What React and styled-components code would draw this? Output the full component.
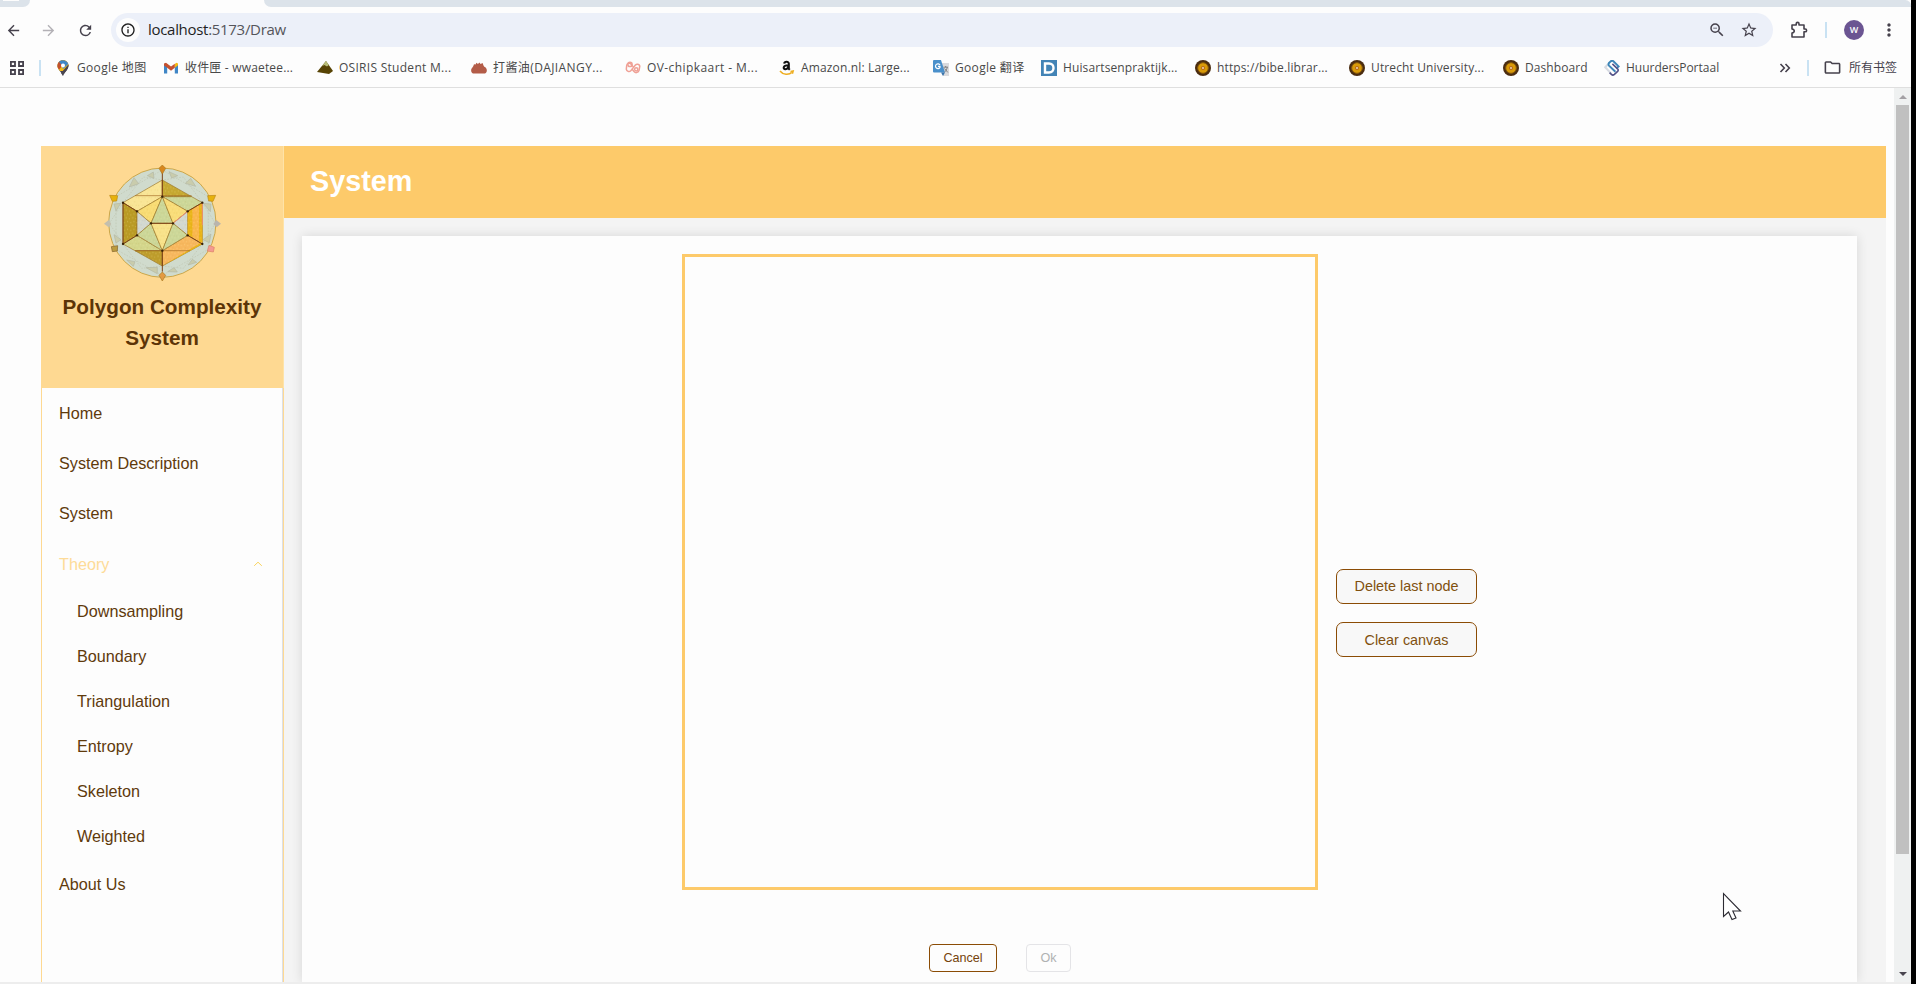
import React from "react";
import styled, { createGlobalStyle } from "styled-components";
import { MdArrowBack, MdArrowForward, MdRefresh, MdOutlineInfo, MdStarBorder, MdMoreVert, MdOutlineFolder, MdZoomOut } from "react-icons/md";

const GlobalStyle = createGlobalStyle`
  * { box-sizing: border-box; }
  body { margin: 0; background: #000; overflow: hidden; }
`;

const ui = `"Open Sans", "Noto Sans CJK SC", sans-serif`;

const Window = styled.div`
  width: 1911px;
  height: 984px;
  display: flex;
  flex-direction: column;
  background: #fdfdfd;
  font-family: "Liberation Sans", Arial, sans-serif;
  position: relative;
`;

const TabStrip = styled.div`
  height: 7px;
  flex: none;
  display: flex;
  background: #fdfdfd;
`;
const TabPiece = styled.div`
  height: 7px;
  width: ${(p) => p.$width};
  margin-left: ${(p) => p.$gap || 0}px;
  padding-left: 3px;
  background: #dce3ea;
  border-radius: ${(p) => p.$radius};
`;
const TabStub = styled.div`
  width: 16px;
  height: 1px;
  background: #fdfdfd;
`;

const Toolbar = styled.div`
  height: 46px;
  flex: none;
  display: flex;
  align-items: center;
  color: #45414c;
`;
const ToolIcon = styled.span`
  display: flex;
  width: ${(p) => p.$width || 18}px;
  margin-left: ${(p) => p.$left || 0}px;
  color: ${(p) => p.$color || "#45414c"};
  svg { display: block; flex: none; }
`;
const AddressBar = styled.div`
  width: 1662px;
  height: 34px;
  margin-left: 17px;
  padding-left: 5px;
  border-radius: 17px;
  background: #ecf0f9;
  display: flex;
  align-items: center;
`;
const SiteInfo = styled.span`
  width: 24px;
  height: 24px;
  border-radius: 50%;
  background: #fdfdfd;
  color: #1f1f1f;
  display: flex;
  align-items: center;
  justify-content: center;
`;
const Url = styled.span`
  margin-left: 8px;
  padding-bottom: 2px;
  flex: 1;
  font: 15px/20px ${ui};
  letter-spacing: -0.3px;
  color: #55555b;
  b { font-weight: 400; color: #1f1f1f; }
`;
const Rule = styled.span`
  width: 2px;
  height: 16px;
  background: #c9e2f3;
  margin-left: ${(p) => p.$left}px;
`;
const Avatar = styled.span`
  width: 20px;
  height: 20px;
  margin-left: 17px;
  border-radius: 50%;
  background: #6b5592;
  color: #fff;
  font: 600 9px/20px ${ui};
  text-align: center;
`;

const BookmarkBar = styled.div`
  height: 35px;
  flex: none;
  padding-bottom: 5px;
  border-bottom: 1px solid #dfdfdf;
  display: flex;
  align-items: center;
  font: 12px/18px ${ui};
  color: #494949;
  white-space: nowrap;
`;
const Bookmark = styled.span`
  width: ${(p) => p.$width}px;
  display: flex;
  gap: 6px;
  align-items: center;
  letter-spacing: ${(p) => p.$track || 0}px;
  svg { flex: none; display: block; }
`;

const Viewport = styled.div`
  flex: 1;
  min-height: 0;
  display: flex;
  border-bottom: 2px solid #ededed;
`;
const Page = styled.div`
  flex: 1;
  display: flex;
  padding: 58px 8px 0 41px;
`;
const Sidebar = styled.aside`
  width: 243px;
  display: flex;
  flex-direction: column;
  border: solid #fed992;
  border-width: 0 1px;
`;
const Brand = styled.div`
  height: 242px;
  flex: none;
  margin: 0 -1px;
  padding: 9px 12px 0;
  background: #fed992;
  border-right: 1px solid #fee3a8;
  display: flex;
  flex-direction: column;
  align-items: center;
`;
const BrandName = styled.h2`
  margin: 6px 0 0;
  width: 210px;
  text-align: center;
  font-size: 20.7px;
  line-height: 31px;
  color: #5c3407;
`;
const Menu = styled.nav`
  flex: 1;
  border-right: 1px solid #dcdfe6;
  font-size: 16.2px;
  color: #5f3a0c;
`;
const MenuItem = styled.div`
  height: ${(p) => (p.$sub ? 45 : 50.4)}px;
  padding: 0 19px ${(p) => (p.$sub ? 2 : 0)}px ${(p) => (p.$sub ? 35 : 17)}px;
  display: flex;
  align-items: center;
  justify-content: space-between;
  color: ${(p) => (p.$active ? "#fddb98" : "inherit")};
`;
const Main = styled.main`
  flex: 1;
  display: flex;
  flex-direction: column;
`;
const Header = styled.h1`
  margin: 0;
  height: 72px;
  flex: none;
  padding-left: 26px;
  background: #fdca6a;
  color: #fff;
  font-size: 28.8px;
  line-height: 71px;
`;
const Content = styled.div`
  flex: 1;
  display: flex;
  padding: 18px 29px 0 18px;
  background: #f4f4f4;
  overflow: hidden;
`;
const Card = styled.section`
  flex: 1;
  padding-top: 18px;
  background: #fdfdfd;
  box-shadow: 0 0 11px rgba(0, 0, 0, 0.12);
`;
const Workspace = styled.div`
  display: flex;
  align-items: center;
  gap: 18px;
  margin-left: 380px;
`;
const DrawArea = styled.div`
  width: 636px;
  height: 636px;
  border: 3px solid #fdca6a;
`;
const Actions = styled.div`
  display: flex;
  flex-direction: column;
  gap: 18px;
  margin-top: 82px;
`;
const ActionButton = styled.button`
  width: 141px;
  height: 35px;
  padding: 0;
  border: 1px solid #8b4c05;
  border-radius: 7px;
  background: #f8f8f8;
  color: #80500f;
  font: 14.4px "Liberation Sans", Arial, sans-serif;
  &:first-child { padding-bottom: 2px; }
`;
const Footer = styled.div`
  width: 636px;
  margin: 54px 0 0 380px;
  display: flex;
  justify-content: center;
  gap: 29px;
`;
const FooterButton = styled.button`
  width: ${(p) => p.$width}px;
  height: 28px;
  padding: 0 0 1px;
  border: 1px solid ${(p) => (p.$muted ? "#e4e4e7" : "#8b4c05")};
  border-radius: 4px;
  background: #fdfdfd;
  color: ${(p) => (p.$muted ? "#b0b2b2" : "#75430c")};
  font: 12.6px "Liberation Sans", Arial, sans-serif;
`;

const ScrollTrack = styled.div`
  width: 17px;
  background: #eff1f1;
  display: flex;
  flex-direction: column;
  align-items: center;
  justify-content: space-between;
  padding-bottom: 6px;
`;
const ScrollTop = styled.div`
  display: flex;
  flex-direction: column;
  align-items: center;
  padding-top: 7px;
  gap: 6px;
`;
const Thumb = styled.div`
  width: 13px;
  height: 749px;
  background: #c0c0c0;
`;
const Pointer = styled.svg`
  position: absolute;
  left: 1722px;
  top: 892px;
`;

const Seal = () => (
  <svg width="16" height="16" viewBox="0 0 16 16">
    <circle cx="8" cy="8" r="8" fill="#4a2c10" />
    <circle cx="8" cy="8" r="5.3" fill="#d99a08" stroke="#8a5a0a" />
    <circle cx="8" cy="8" r="2" fill="#b5651d" />
    <circle cx="8" cy="8" r="0.9" fill="#f5e2c0" />
  </svg>
);

const icons = {
  maps: (
    <svg width="16" height="16" viewBox="0 0 16 16">
      <path d="M8 16C7.4 13 2.5 10 2.5 5.6A5.5 5.5 0 0 1 13.5 5.6C13.5 10 8.6 13 8 16Z" fill="#4a4650" />
      <path d="M2.5 6A5.5 5.5 0 0 1 13.5 5.5L9 11 5 11C3.5 9 2.5 8 2.5 6Z" fill="#f4b912" />
      <path d="M2.5 6.5C2.4 4 3.5 2.5 4.5 1.6L8 5 4.2 9.4C3.2 8.3 2.5 7.6 2.5 6.5Z" fill="#c2502e" />
      <path d="M4 2A5.5 5.5 0 0 1 13.2 4L8 9 6 4Z" fill="#3f86c6" />
      <path d="M13.4 4.5L6 13 8 16C8.6 13 13.5 10 13.5 5.6Z" fill="#4a4650" />
      <circle cx="8" cy="5.6" r="2" fill="#fff" />
    </svg>
  ),
  gmail: (
    <svg width="16" height="16" viewBox="0 0 16 16">
      <path d="M1 4V13.5H4.2V7Z" fill="#3f86c6" />
      <path d="M15 4V13.5H11.8V7Z" fill="#3f86c6" />
      <path d="M11.8 7V4L13.4 2.7L15 3.5V5.2L11.8 8Z" fill="#f4b912" />
      <path d="M1 5.5V3.5L3 2.7L8 6.6L11.8 3.7V7.8L8 10.7L4.2 7.8Z" fill="#c5512f" />
    </svg>
  ),
  osiris: (
    <svg width="16" height="16" viewBox="0 0 16 16">
      <path d="M9 1L16 11 12 14 0 12Z" fill="#574304" />
      <path d="M9 1L11.8 5 10 6.4 7.3 5 5 6.3Z" fill="#b8bd78" />
    </svg>
  ),
  soy: (
    <svg width="16" height="16" viewBox="0 0 16 16">
      <path d="M2 13.5C-.3 12.5 -.5 9 1.6 7.2Q2.4 6 3 4.2L4.6 4.6 5.4 2.8 7 4 8.4 2.6 9.6 4 11.6 3 12.4 5.2Q12.8 6.6 14.2 7.2C16.4 8.6 16.4 12.4 14 13.5Z" fill="#b35c48" />
    </svg>
  ),
  ov: (
    <svg width="16" height="16" viewBox="0 0 16 16" fill="none" stroke="#efa095" strokeWidth="1.5">
      <path d="M6.8 8.5L8.6 11.2A3 3 0 0 0 14 10.6L14.8 6A2.6 2.6 0 0 0 10.4 5L5.8 10.8A2.7 2.7 0 0 1 1.3 9.2L1.7 5.6A2.5 2.5 0 0 1 6 4L8 6.6" />
      <circle cx="5" cy="4.4" r="2.1" />
      <circle cx="11.2" cy="9.3" r="1.6" />
    </svg>
  ),
  amazon: (
    <svg width="16" height="16" viewBox="0 0 16 16" fill="none">
      <path d="M5.2 3.7C5.5 1.4 9.8 1 9.8 3.7V8.8L10.8 9.8M9.6 5.2C3.4 5 4 9.5 6.4 9.2C8.4 9 9.6 7.5 9.6 5.5" stroke="#111" strokeWidth="2.1" />
      <path d="M1 11C4 15 10 15.3 13 12.3M11.5 11.4L14.2 11 13.4 13.8" stroke="#eeae21" strokeWidth="1.5" />
    </svg>
  ),
  translate: (
    <svg width="16" height="16" viewBox="0 0 16 16">
      <path d="M6 3H16V16H10Z" fill="#dadadd" />
      <path d="M1 0H8L12 12.5H1Q0 12.5 0 11.5V1Q0 0 1 0Z" fill="#4a90cb" />
      <path d="M8 12.5H12L10 16Z" fill="#3973aa" />
      <path d="M7 5A2.4 2.4 0 1 0 7 7.4V6.4H5" fill="none" stroke="#fff" strokeWidth="1.2" />
      <path d="M10.5 7.2H15M12.7 6V7.2M14.3 7.3C13.7 10 12.5 11.5 11.7 12M11.5 8.5L14.8 12.4" fill="none" stroke="#777" strokeWidth=".9" />
    </svg>
  ),
  huisarts: (
    <svg width="16" height="16" viewBox="0 0 16 16">
      <path d="M0 0H16V16H0Z" fill="#4384b6" />
      <path d="M4 3.5H8C14 3.5 14 12.5 8 12.5H4Z" fill="none" stroke="#fff" strokeWidth="2.4" />
    </svg>
  ),
  seal: <Seal />,
  huurders: (
    <svg width="16" height="16" viewBox="0 0 16 16" fill="none" strokeWidth="2">
      <path d="M3.6 4.6L1.2 7.2L7 13.4" stroke="#d7dbe2" />
      <path d="M12.2 8.6L14.6 6.4L9.4 1.2Q8 .2 6.6 1.4L4.8 3.2Q4 4.4 5 5.6L11.4 11.8" stroke="#3d86b8" />
      <path d="M8.4 3.8L13.6 8.8Q14.8 10 13.6 11.4L10.4 14.4Q8.8 15.8 7.4 14.4L5.6 12.6" stroke="#545288" strokeWidth="1.6" />
    </svg>
  ),
};

const bookmarks = [
  ["maps", "Google 地图", 108, 0.33],
  ["gmail", "收件匣 - wwaetee...", 154, 0.18],
  ["osiris", "OSIRIS Student M...", 154, 0.28],
  ["soy", "打酱油(DAJIANGY...", 154, 0.4],
  ["ov", "OV-chipkaart - M...", 154, 0.42],
  ["amazon", "Amazon.nl: Large...", 154, 0.15],
  ["translate", "Google 翻译", 108, 0.33],
  ["huisarts", "Huisartsenpraktijk...", 154, 0.12],
  ["seal", "https://bibe.librar...", 154, 0.13],
  ["seal", "Utrecht University...", 154, 0.13],
  ["seal", "Dashboard", 101, 0.08],
  ["huurders", "HuurdersPortaal", 175, 0],
];

const Gem = ({ x, y, fill }) => (
  <path d={`M${x} ${y - 13}L${x + 10} ${y - 3}L${x} ${y + 14}L${x - 10} ${y - 3}Z`} fill={fill} stroke="#a97820" strokeWidth="2" />
);

const faces = [
  ["69,143 187,75 187,125 111,169", "#f9e596"],
  ["187,75 275,125 187,125", "#c5a830"],
  ["187,125 275,125 307,143 263,169", "#cbd799"],
  ["69,143 111,169 111,241 69,267", "#b99a24"],
  ["263,169 307,143 307,267 263,241", "#fab64c"],
  ["69,267 111,241 187,287 105,287", "#d3d68c"],
  ["105,287 187,287 187,333", "#bd9c2b"],
  ["187,287 263,241 307,267 187,333", "#f7b75e"],
  ["111,169 187,125 153,205", "#f8dc74"],
  ["187,125 219,205 153,205", "#cbd799"],
  ["187,125 263,169 219,205", "#f9dd79"],
  ["111,169 153,205 111,241", "#d2d8d2"],
  ["263,169 263,241 219,205", "#d2d8d2"],
  ["111,241 153,205 187,287", "#cbd799"],
  ["153,205 219,205 187,287", "#f8e28a"],
  ["219,205 263,241 187,287", "#cbd799"],
];

const vertices = [
  [187, 125], [111, 169], [263, 169], [153, 205], [219, 205], [111, 241],
  [263, 241], [187, 287], [69, 143], [307, 143], [69, 267], [307, 267],
];

const Logo = () => (
  <svg width="125" height="130" viewBox="0 0 375 390">
    <defs>
      <pattern id="grain" width="19" height="23" patternUnits="userSpaceOnUse">
        <path d="M3 2v5M12 6v3M7 14v4M16 17v4" stroke="#fff3a8" strokeWidth="2" opacity=".4" />
        <path d="M9 1v3M2 12v3M14 11v3" stroke="#bb8f26" strokeWidth="2" opacity=".25" />
      </pattern>
    </defs>
    <ellipse cx="187" cy="203" rx="161" ry="164" fill="#d0dbcd" stroke="#cda748" strokeWidth="3" />
    <g fill="none" stroke="#bfc6b2" strokeWidth="2" strokeDasharray="5 4">
      <path d="M187 45L325 125V283L187 361L48 283V125Z" />
      <path d="M69 143L28 205L69 267M307 143L346 205L307 267M69 143L130 66L187 75L250 66L307 143M69 267L125 340L187 333L250 340L307 267" />
    </g>
    <g fill="#c9ccac" stroke="#b4b8a6" strokeWidth="2">
      <path d="M88 96L102 68L116 86Z" />
      <path d="M142 62L160 51L162 70Z" />
      <path d="M207 50L233 62L215 69Z" />
      <path d="M256 85L272 70L287 94Z" />
      <path d="M42 147L62 145L48 168Z" />
      <path d="M310 145L333 147L331 170Z" />
      <path d="M42 239L63 254L48 264Z" />
      <path d="M309 254L333 237L328 263Z" />
      <path d="M80 315L105 320L100 334Z" />
      <path d="M138 338L172 337V356Z" />
      <path d="M203 350L222 338L232 351Z" />
      <path d="M264 330L277 313L290 322Z" />
    </g>
    {faces.map(([points, fill]) => (
      <polygon key={points} points={points} fill={fill} stroke="#9a7426" strokeWidth="2" />
    ))}
    <path d="M263 169L277 161V249L263 241ZM297 149L307 143V267L297 261ZM187 333L307 267V260Z" fill="#e9b417" />
    <path d="M187 75L307 143V267L187 333L69 267V143Z" fill="url(#grain)" />
    <path d="M105 122H275M105 287H270M187 75V125M187 287V333" stroke="#a36b24" strokeWidth="2" />
    <path d="M187 50V125M187 287V350M69 143V267L111 241M69 143L111 169M307 143L263 169M307 267L263 241M153 205H219" fill="none" stroke="#7c4117" strokeWidth="3" />
    <path d="M219 205L263 169M307 143V210" stroke="#ed8d74" strokeWidth="3" />
    <g fill="#382208">
      {vertices.map(([x, y]) => (
        <circle key={`${x}-${y}`} cx={x} cy={y} r="3.5" />
      ))}
    </g>
    <Gem x={187} y={43} fill="#d8871e" />
    <Gem x={187} y={364} fill="#e39a43" />
    <path d="M29 121L53 122L50 138L37 139Z" fill="#e7b20c" stroke="#b98713" strokeWidth="2" />
    <path d="M347 121L323 122L326 138L339 139Z" fill="#e7b20c" stroke="#b98713" strokeWidth="2" />
    <path d="M12 206L26 195L34 207L26 217Z" fill="#c3bfae" />
    <path d="M363 206L349 195L340 207L350 217Z" fill="#b9b5ad" />
    <path d="M34 275L53 272L52 288L37 290Z" fill="#bb9b3e" stroke="#80612b" strokeWidth="2" />
    <path d="M343 277L327 271L322 288L340 291Z" fill="#f49a91" stroke="#dd8067" strokeWidth="2" />
  </svg>
);

const menu = [
  { label: "Home" },
  { label: "System Description" },
  { label: "System" },
  { label: "Theory", active: true },
  { label: "Downsampling", sub: true },
  { label: "Boundary", sub: true },
  { label: "Triangulation", sub: true },
  { label: "Entropy", sub: true },
  { label: "Skeleton", sub: true },
  { label: "Weighted", sub: true },
  { label: "About Us" },
];

export default function App() {
  return (
    <Window>
      <GlobalStyle />
      <TabStrip>
        <TabPiece $width="30px" $radius="0 0 10px 0"><TabStub /></TabPiece>
        <TabPiece $width="1647px" $gap={234} $radius="0 8px 0 10px" />
      </TabStrip>
      <Toolbar>
        <ToolIcon $left={5} $width={17}><MdArrowBack size={17} /></ToolIcon>
        <ToolIcon $left={18} $color="#b3b1b6"><MdArrowForward size={17} /></ToolIcon>
        <ToolIcon $left={19} $width={17}><MdRefresh size={17} /></ToolIcon>
        <AddressBar>
          <SiteInfo><MdOutlineInfo size={16} /></SiteInfo>
          <Url><b>localhost</b>:5173/Draw</Url>
          <ToolIcon $width={32}><MdZoomOut size={18} /></ToolIcon>
          <ToolIcon $width={33}><MdStarBorder size={18} /></ToolIcon>
        </AddressBar>
        <ToolIcon $left={17} $width={18}>
          <svg width="18" height="18" viewBox="0 0 18 18" fill="none" stroke="currentColor" strokeWidth="1.6">
            <path d="M2 4H6.2V2.8A1.4 1.4 0 0 1 9 2.8V4H14V8H15.2A1.3 1.3 0 0 1 15.2 10.8H14V16H2V12C5 11.5 5 8.5 2 8Z" strokeLinejoin="round" />
          </svg>
        </ToolIcon>
        <Rule $left={17} />
        <Avatar>W</Avatar>
        <ToolIcon $left={15} $width={20}><MdMoreVert size={20} /></ToolIcon>
      </Toolbar>
      <BookmarkBar>
        <ToolIcon $left={9} $width={16}>
          <svg width="16" height="16" viewBox="0 0 16 16" fill="none" stroke="currentColor" strokeWidth="1.8">
            <path d="M1.9 1.9H6V6H1.9ZM10 1.9H14.1V6H10ZM1.9 10H6V14.1H1.9ZM10 10H14.1V14.1H10Z" />
          </svg>
        </ToolIcon>
        <Rule $left={14} />
        <Bookmark $width={14} />
        {bookmarks.map(([icon, label, width, track]) => (
          <Bookmark key={label} $width={width} $track={track}>{icons[icon]}<span>{label}</span></Bookmark>
        ))}
        <ToolIcon $width={12}>
          <svg width="12" height="12" viewBox="0 0 12 12" fill="none" stroke="currentColor" strokeWidth="1.6">
            <path d="M1.5 2L5.3 6L1.5 10M6.5 2L10.3 6L6.5 10" />
          </svg>
        </ToolIcon>
        <Rule $left={16} />
        <ToolIcon $left={14} $width={19}><MdOutlineFolder size={19} /></ToolIcon>
        <ToolIcon $left={7} $width={50}>所有书签</ToolIcon>
      </BookmarkBar>
      <Viewport>
        <Page>
          <Sidebar>
            <Brand>
              <Logo />
              <BrandName>Polygon Complexity System</BrandName>
            </Brand>
            <Menu>
              {menu.map((m) => (
                <MenuItem key={m.label} $sub={m.sub} $active={m.active}>
                  {m.label}
                  {m.active && (
                    <svg width="10" height="6" viewBox="0 0 10 6" fill="none" stroke="#f9d45f">
                      <path d="M1.2 4.8L5 1.2L8.8 4.8" />
                    </svg>
                  )}
                </MenuItem>
              ))}
            </Menu>
          </Sidebar>
          <Main>
            <Header>System</Header>
            <Content>
              <Card>
                <Workspace>
                  <DrawArea />
                  <Actions>
                    <ActionButton>Delete last node</ActionButton>
                    <ActionButton>Clear canvas</ActionButton>
                  </Actions>
                </Workspace>
                <Footer>
                  <FooterButton $width={68}>Cancel</FooterButton>
                  <FooterButton $width={45} $muted>Ok</FooterButton>
                </Footer>
              </Card>
            </Content>
          </Main>
        </Page>
        <ScrollTrack>
          <ScrollTop>
            <svg width="8" height="4" viewBox="0 0 8 4"><path d="M0 4L4 0L8 4Z" fill="#a3a0a4" /></svg>
            <Thumb />
          </ScrollTop>
          <svg width="8" height="4" viewBox="0 0 8 4"><path d="M0 0H8L4 4Z" fill="#49454f" /></svg>
        </ScrollTrack>
      </Viewport>
      <Pointer width="22" height="30" viewBox="0 0 22 30">
        <path d="M1.5 1.5V24.5L6.5 20L10 27.5L14 26L10.8 19H18.5Z" fill="#fff" stroke="#2c2b33" strokeWidth="1.1" />
      </Pointer>
    </Window>
  );
}
